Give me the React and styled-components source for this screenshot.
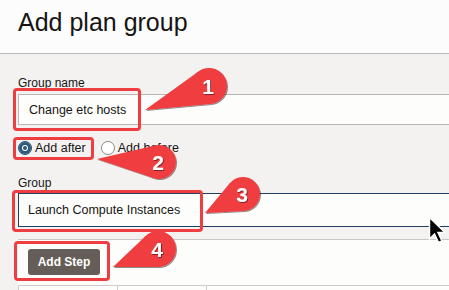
import React from "react";
import styled, { createGlobalStyle } from "styled-components";

const GlobalStyle = createGlobalStyle`
  html, body {
    margin: 0;
    padding: 0;
    background: #f3f2f1;
    font-family: "Liberation Sans", Arial, sans-serif;
    color: #161513;
  }
`;

const Page = styled.div`
  position: relative;
  width: 449px;
  height: 290px;
  overflow: hidden;
  background: #f3f2f1;
`;

const Header = styled.header`
  box-sizing: border-box;
  height: 54px;
  padding: 8px 0 0 18px;
  background: #fcfcfc;
  border-bottom: 1px solid #bababa;
`;

const Title = styled.h1`
  margin: 0;
  font-size: 25px;
  line-height: 29px;
  font-weight: normal;
  color: #161513;
`;

const Form = styled.div`
  display: flex;
  flex-direction: column;
  width: 640px;
  padding: 22px 0 0 18px;
`;

const Label = styled.label`
  font-size: 12px;
  line-height: 14px;
  margin: ${(p) => p.$top || 0}px 0 ${(p) => p.$gap || 4}px;
`;

const TextField = styled.div`
  box-sizing: border-box;
  height: ${(p) => p.$height}px;
  display: flex;
  align-items: center;
  padding-left: ${(p) => (p.$focused ? 9 : 10)}px;
  background: #fdfdfc;
  border: 1px solid ${(p) => (p.$focused ? "#213f5e" : "#bcb6b1")};
  font-size: 12.5px;
  color: #161513;
`;

const RadioRow = styled.div`
  display: flex;
  align-items: center;
  gap: 15px;
  height: 22px;
  margin-top: 12px;
  font-size: 12.5px;
`;

const Option = styled.span`
  display: flex;
  align-items: center;
  gap: 3px;
`;

const RadioDot = styled.span`
  box-sizing: border-box;
  width: 14px;
  height: 14px;
  border-radius: 50%;
  background: ${(p) => (p.$checked ? "#2f587a" : "#fff")};
  border: 1px solid ${(p) => (p.$checked ? "#2f587a" : "#8d8a87")};
  box-shadow: ${(p) =>
    p.$checked ? "inset 0 0 0 3px #2f587a, inset 0 0 0 4px #fff" : "none"};
`;

const Table = styled.div`
  margin-top: 12px;
  background: #fdfdfc;
  border-top: 1px solid #c9c7c5;
  height: 60px;
`;

const Toolbar = styled.div`
  display: flex;
  padding: 9px 10px 10px;
  border-bottom: 1px solid #cfcdcb;
`;

const Button = styled.button`
  width: 72px;
  height: 26px;
  border: none;
  border-radius: 3px;
  background: #655e58;
  color: #fff;
  font-family: "Liberation Sans", Arial, sans-serif;
  font-size: 12px;
  font-weight: bold;
  padding: 0;
`;

const HeadRow = styled.div`
  display: flex;
  height: 20px;
`;

const HeadCell = styled.div`
  width: ${(p) => p.$w}px;
  border-left: 1px solid #cfcdcb;
`;

const Highlight = styled.div`
  position: absolute;
  box-sizing: border-box;
  left: ${(p) => p.$x}px;
  top: ${(p) => p.$y}px;
  width: ${(p) => p.$w}px;
  height: ${(p) => p.$h}px;
  border: 3px solid #ef3e41;
  border-radius: 4px;
`;

const Overlay = styled.svg`
  position: absolute;
  left: 0;
  top: 0;
  pointer-events: none;
`;

const Cursor = styled.svg`
  position: absolute;
  left: 428px;
  top: 216px;
`;

const callouts = [
  { n: 1, cx: 209, cy: 86, r: 18, tx: 145, ty: 110 },
  { n: 2, cx: 159, cy: 162, r: 17, tx: 97, ty: 159 },
  { n: 3, cx: 243, cy: 194, r: 17, tx: 205, ty: 213 },
  { n: 4, cx: 158, cy: 249, r: 18, tx: 113, ty: 267 },
];

function tailPoints({ cx, cy, r, tx, ty }) {
  const dx = tx - cx;
  const dy = ty - cy;
  const d = Math.hypot(dx, dy);
  const base = Math.atan2(dy, dx);
  const off = Math.acos(r / d);
  const a = [base - off, base + off].map((t) => [
    cx + r * Math.cos(t),
    cy + r * Math.sin(t),
  ]);
  return `${tx},${ty} ${a[0][0]},${a[0][1]} ${cx},${cy} ${a[1][0]},${a[1][1]}`;
}

const Callout = ({ c }) => (
  <g filter="url(#bubbleShadow)">
    <polygon points={tailPoints(c)} fill="#ef3e41" />
    <circle cx={c.cx} cy={c.cy} r={c.r} fill="#ef3e41" />
    <text
      x={c.cx - 1}
      y={c.cy + 8}
      textAnchor="middle"
      fontFamily="Liberation Sans, Arial, sans-serif"
      fontWeight="bold"
      fontSize="21"
      fill="#fff"
      filter="url(#digitShadow)"
    >
      {c.n}
    </text>
  </g>
);

export default function App() {
  return (
    <Page>
      <GlobalStyle />
      <Header>
        <Title>Add plan group</Title>
      </Header>
      <Form>
        <Label>Group name</Label>
        <TextField $height={31}>Change etc hosts</TextField>
        <RadioRow>
          <Option>
            <RadioDot $checked />
            Add after
          </Option>
          <Option>
            <RadioDot />
            Add before
          </Option>
        </RadioRow>
        <Label $top={17} $gap={3}>Group</Label>
        <TextField $height={34} $focused>
          Launch Compute Instances
        </TextField>
        <Table>
          <Toolbar>
            <Button>Add Step</Button>
          </Toolbar>
          <HeadRow>
            <HeadCell $w={98} />
            <HeadCell $w={88} />
            <HeadCell $w={300} />
          </HeadRow>
        </Table>
      </Form>

      <Highlight $x={13} $y={88} $w={128} $h={43} />
      <Highlight $x={13} $y={137} $w={81} $h={23} />
      <Highlight $x={12} $y={190} $w={191} $h={42} />
      <Highlight $x={14} $y={241} $w={96} $h={40} />

      <Overlay width="449" height="290" viewBox="0 0 449 290">
        <defs>
          <filter id="bubbleShadow" x="-20%" y="-20%" width="140%" height="140%">
            <feDropShadow dx="1" dy="1" stdDeviation="0.6" floodColor="#000" floodOpacity="0.45" />
          </filter>
          <filter id="digitShadow" x="-30%" y="-30%" width="160%" height="160%">
            <feDropShadow dx="0.8" dy="0.8" stdDeviation="0.4" floodColor="#000" floodOpacity="0.6" />
          </filter>
        </defs>
        {callouts.map((c) => (
          <Callout key={c.n} c={c} />
        ))}
      </Overlay>

      <Cursor width="20" height="28" viewBox="0 0 20 28">
        <path
          d="M1.5 1.5 L1.5 23 L6.5 18 L10.5 26.5 L14 25 L10 16.5 L17 16.5 Z"
          fill="#000"
          stroke="#fff"
          strokeWidth="1.5"
          strokeLinejoin="miter"
        />
      </Cursor>
    </Page>
  );
}
